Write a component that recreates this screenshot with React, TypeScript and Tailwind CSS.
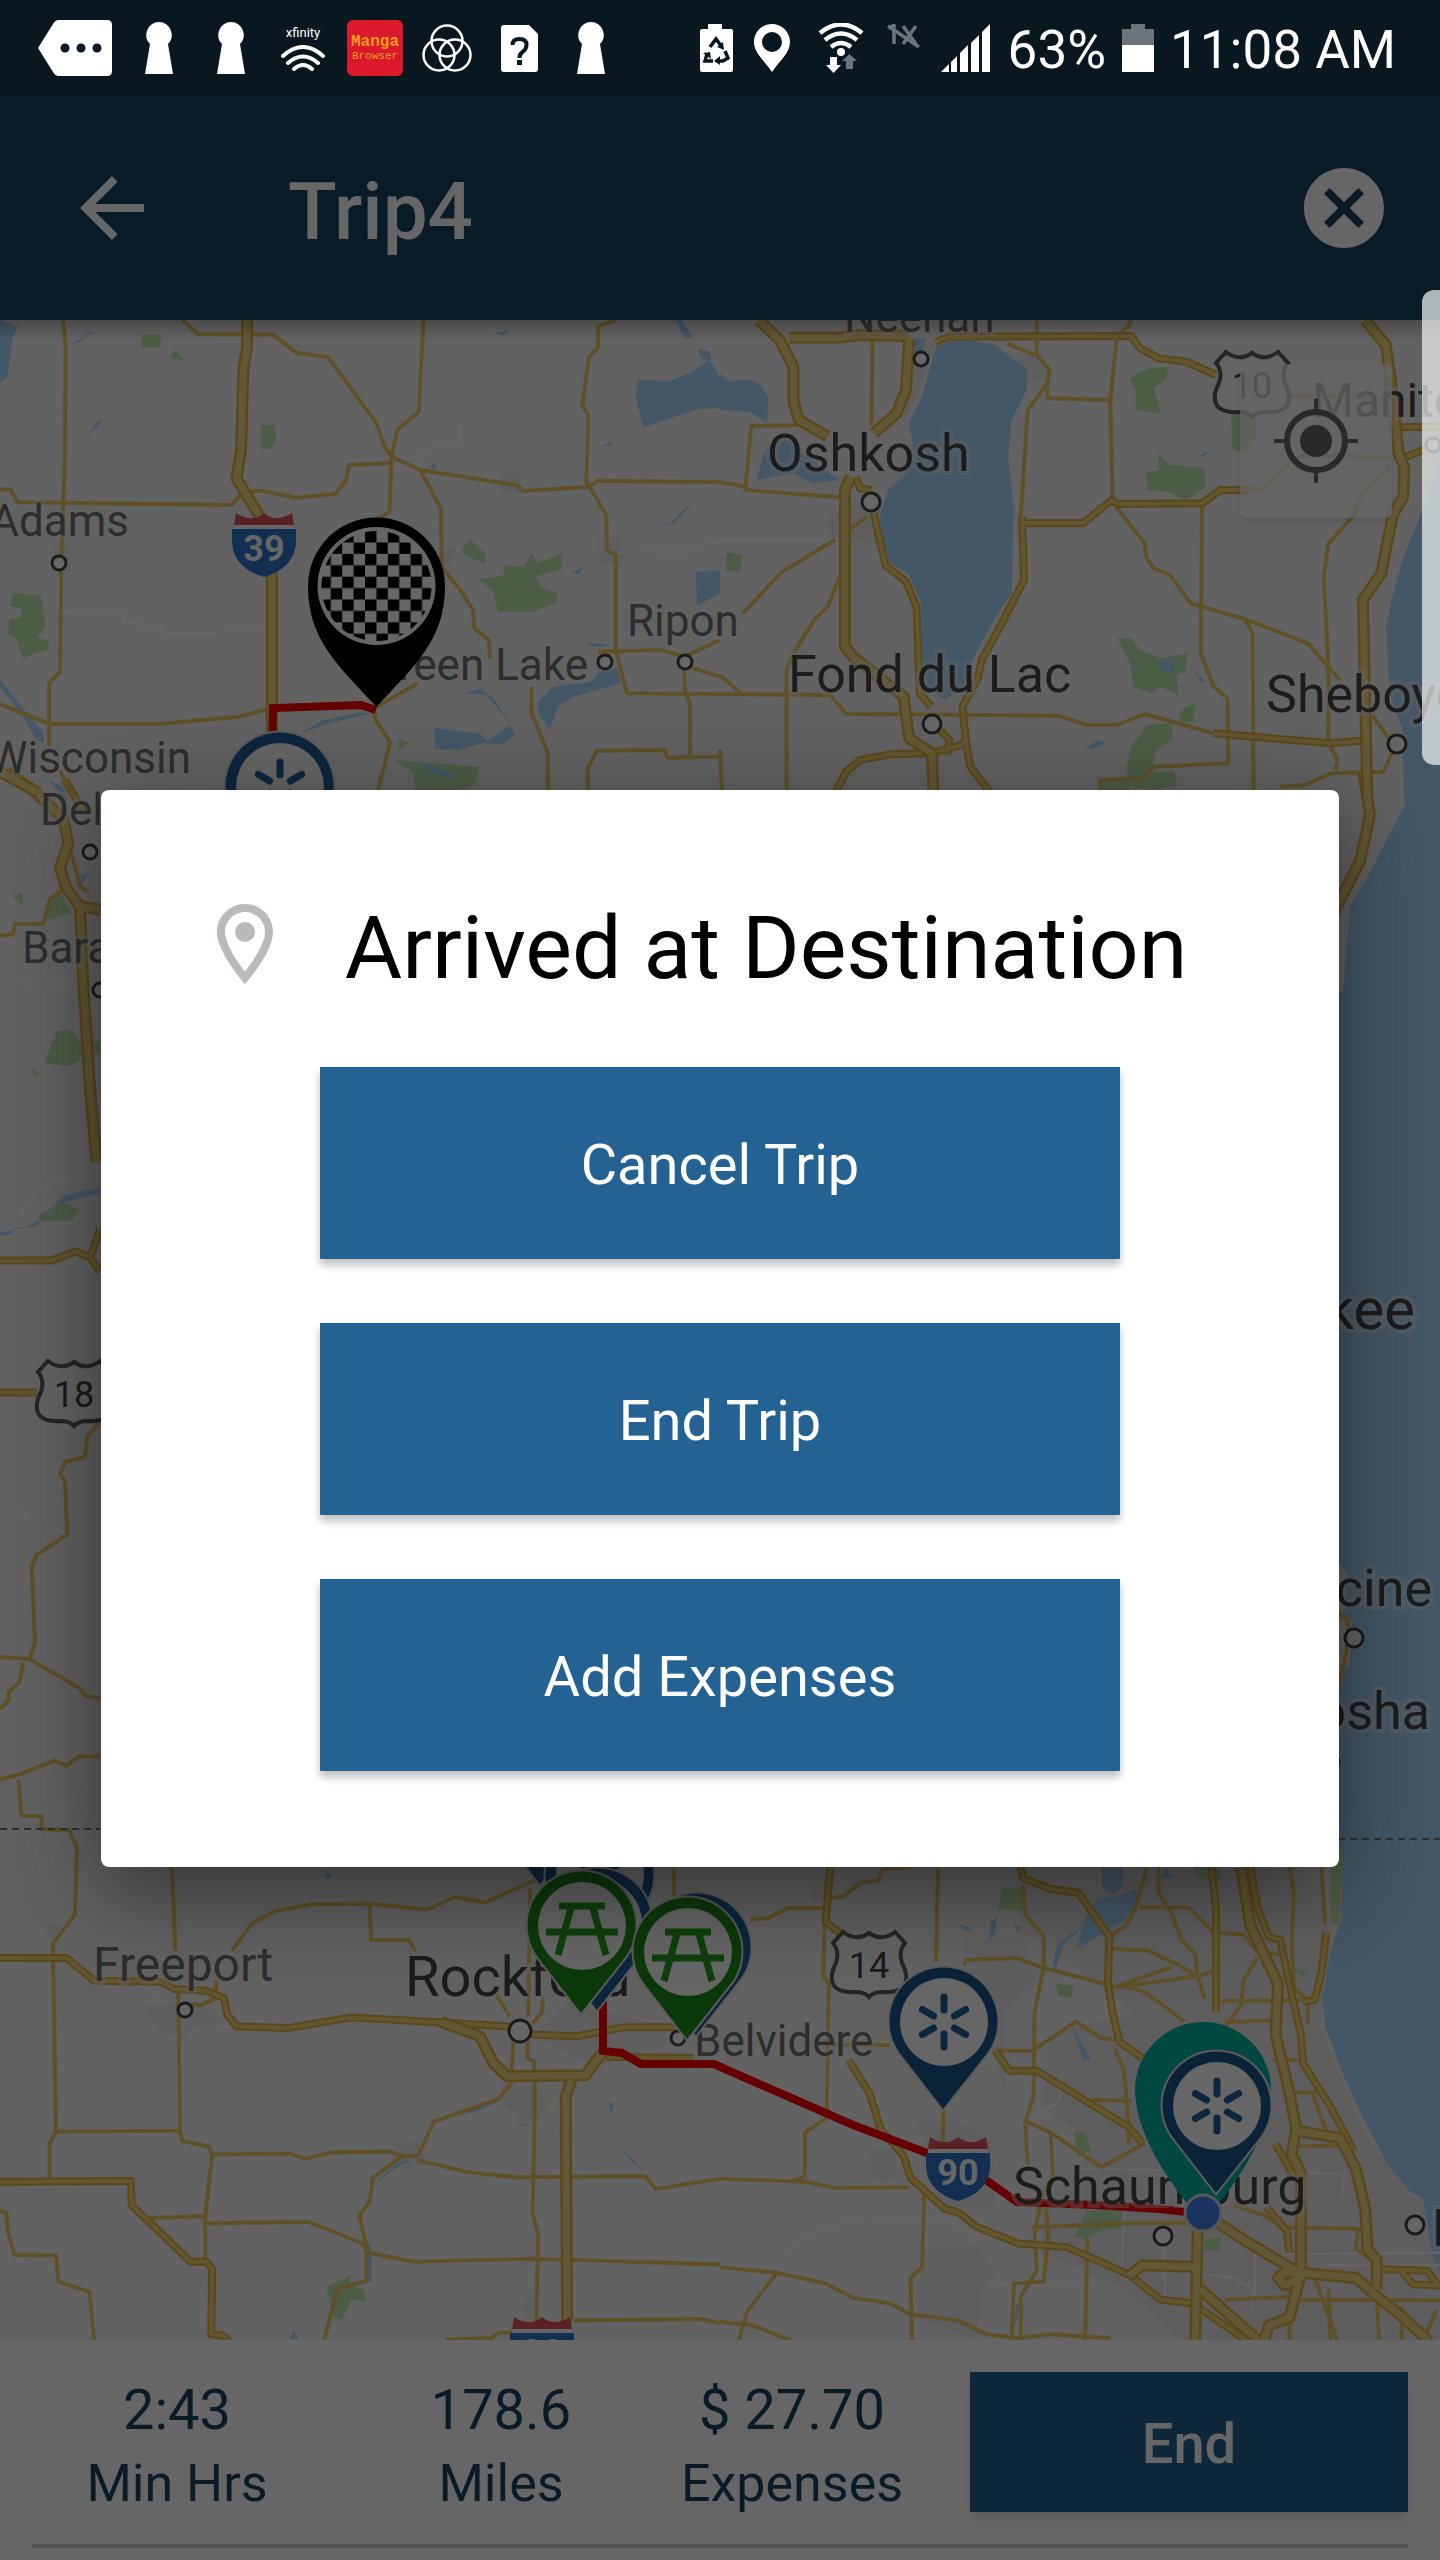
import { useState } from 'react'
import type { ReactNode } from 'react'
import { MdArrowBack, MdCancel } from 'react-icons/md'

interface Tile {
  transform: string
  urban?: string[]
  park?: string[]
  water?: string[]
  land?: string[]
  street?: string[]
  minor: string[]
  main: string[]
  highway: string[]
}

interface Label {
  text: string
  x: number
  y: number
  size: number
  anchor?: 'start' | 'end'
  dark?: boolean
}

// every tile keeps its own grid, the transform places it on the map
const tiles: Tile[] = [
  {
    transform: 'translate(0 780) scale(.33333 .70153)',
    park: [
      '135,402 168,358 210,355 250,378 240,400 205,408 140,405',
      '280,375 300,370 300,392 283,390',
      '97,410 122,418 100,425',
      '140,170 180,160 215,190 145,200',
      '35,165 68,160 68,180',
      '115,620 140,615 180,600 240,612 215,628 120,630',
    ],
    water: [
      '0,650 30,648 50,638 110,636 170,605 300,588 300,582 190,592 120,628 60,640 0,645',
      '240,135 268,133 245,148',
      '145,0 200,30 190,10',
      '160,1418 185,1407 165,1418',
    ],
    street: ['0,290 300,292', '60,620 120,580 240,560 300,550', '0,1040 50,1042 110,1065 300,1078'],
    minor: [
      '0,222 40,220 45,205 130,205 150,170 190,155',
      '300,915 262,935 255,965 195,972 180,990 195,1000 202,1075 110,1105 95,1120 105,1230 88,1253 0,1250',
      '88,1253 240,1295 255,1305 300,1310',
      '70,1258 60,1285 25,1300 28,1310 0,1325',
      '300,1392 235,1392 200,1405 165,1398 60,1417 0,1425',
      '205,90 240,150 262,160',
    ],
    main: ['0,685 155,685 225,672 270,680 300,700', '0,873 110,873', '195,0 250,45', '270,680 300,640'],
    highway: ['20,-12 100,15 190,55 205,90 180,125 200,155 240,180 300,185', '240,180 250,290 270,440 290,545'],
  },
  {
    transform: 'translate(1320 780) scale(.33333 .70153)',
    water: ['255,-10 255,35 140,140 90,180 70,300 40,310 40,1568 360,1568 360,-10'],
    land: ['40,1110 80,1130 70,1190 95,1200 90,1260 40,1290'],
    minor: ['40,1180 85,1200 80,1240 60,1285'],
    main: [],
    highway: ['130,-10 150,50 120,115 40,190'],
  },
  {
    transform: 'translate(0 310) scale(.459184 .333333)',
    urban: [
      '1085,555 1095,490 1125,470 1135,545',
      '1300,690 1350,680 1360,755 1310,765',
      '110,705 150,700 155,785 115,790',
      '965,710 990,715 985,760 965,765',
    ],
    park: [
      '308,75 350,75 350,113 308,113',
      '367,147 383,117 400,150',
      '568,345 598,345 602,385 590,418 568,418',
      '28,850 88,855 100,945 80,985 105,990 105,1018 50,1045 35,985 18,975 20,930 48,920 45,895 22,888',
      '1005,715 1025,690 1060,735 1055,760 1010,735',
      '1040,808 1095,798 1100,765 1140,772 1158,730 1170,760 1222,730 1225,778 1165,800 1180,835 1215,850 1212,878 1160,905 1085,905 1072,840',
      '868,1285 890,1300 868,1322',
      '855,1350 1043,1370 1035,1425 1000,1440 905,1440 900,1385',
    ],
    water: [
      '0,30 40,50 28,80 15,205 0,215',
      '1388,208 1455,215 1500,190 1545,150 1568,200 1568,295 1520,297 1402,352 1385,270',
      '1518,118 1545,122 1550,150 1530,148',
      '1075,68 1112,60 1095,78',
      '1515,785 1568,780 1568,850 1518,888',
      '1170,1180 1205,1130 1285,1115 1305,1085 1345,1075 1352,1120 1250,1160 1215,1190 1197,1258 1175,1215',
      '945,1255 1045,1270 1060,1295 1110,1245 1122,1272 1095,1303 1050,1300 1000,1320 948,1318',
      '655,1270 700,1232 780,1208 810,1210 730,1235',
      '0,1110 95,1270 95,1300 80,1290 40,1200 0,1130',
      '1470,30 1490,80 1510,88 1495,50 1485,30',
      '190,380 210,335 228,328',
      '150,102 170,98 200,68 200,60 180,85',
      '1425,652 1440,648 1470,640 1508,578 1480,610 1462,638',
      '1245,790 1270,768 1262,792',
      '1313,412 1325,397 1337,405',
      '1268,997 1330,1005 1300,1012',
      '1015,1150 1045,1135 1075,1165 1110,1240 1060,1155',
      '905,1352 985,1390 985,1408 940,1390',
      '935,470 950,455 948,478',
    ],
    street: ['130,905 270,915 270,935 350,950 355,970 490,968 500,950 580,950', '865,445 910,440 950,410 1000,390 1000,345', '1345,728 1500,725 1540,700 1568,698'],
    minor: [
      '138,30 143,120 141,460 134,720 131,1085 107,1120 107,1310',
      '0,538 24,540 38,577 505,585 530,545 570,542 645,563 730,552 753,512 760,465 850,460',
      '398,30 430,72 595,74 645,128 715,142 820,340 838,412 853,440 915,480 1125,525 1140,543 1285,530 1303,512 1568,517',
      '922,30 912,305 865,360 853,440 848,605 825,625',
      '1340,32 1303,48 1302,115 1283,140 1268,285 1281,315 1277,515 1320,615 1322,720 1341,735 1341,1020 1365,1150 1568,1152',
      '915,480 960,595 962,770 1005,845 1030,900 1033,955 1065,990 1067,1045',
      '1303,1025 1440,1020 1490,1040 1568,990',
      '1500,1070 1568,1100',
      '1490,1080 1492,1145 1503,1180 1503,1335',
      '0,1182 105,1241 350,1241 520,1220 582,1198',
      '820,1190 910,1120',
      '815,1205 818,1230 850,1297 825,1430 825,1470',
      '1157,1130 1157,1205 1193,1330 1193,1470',
      '1280,1470 1280,1375 1300,1322 1448,1320 1453,1343 1568,1340',
      '130,1380 160,1460',
    ],
    main: [],
    highway: ['538,30 538,110 530,180 525,420 515,505 575,640', '592,760 592,1300', '0,1385 85,1450'],
  },
  {
    transform: 'translate(720 310) scale(.459184 .333333)',
    urban: ['230,620 330,560 370,600 340,700 240,680', '400,90 470,90 430,260 400,330', '640,150 700,130 720,200 670,220'],
    park: [
      '890,205 935,175 978,170 970,210 945,235 960,312 905,300 905,240',
      '1113,290 1165,310 1168,380 1140,435 1115,415',
      '955,430 980,465 1030,470 1055,475 1058,530 1015,570 975,545 930,540 928,485 955,480',
      '15,725 48,735 45,785 12,783',
      '865,985 895,985 915,1020 960,1045 1018,1030 1015,1080 995,1095 998,1155 960,1130 940,1150 900,1130 893,1060',
      '930,1245 985,1240 985,1290 950,1320 940,1385 990,1385 995,1425 950,1440 890,1430 885,1370 895,1310',
      '1005,1200 1038,1175 1030,1235 1000,1235',
      '828,1410 890,1405 890,1440 828,1440',
    ],
    water: [
      '470,110 520,85 600,105 640,150 670,175 668,240 635,330 628,440 640,600 635,850 600,920 550,1050 530,1130 490,1170 450,1130 440,1040 438,880 410,790 370,760 345,640 365,540 400,500 420,400 410,340 440,260',
      '0,190 20,215 60,208 85,220 105,260 103,340 65,305 0,300',
      '95,430 120,385 160,395 190,440 260,510 200,520 160,490 80,510',
      '425,85 450,85 440,130 425,130',
      '1568,440 1530,600 1500,700 1475,800 1450,950 1458,1150 1485,1250 1490,1470 1568,1470',
      '795,1315 825,1290 840,1300 812,1318',
      '1035,1090 1055,1110 1050,1120',
      '1037,440 1068,420 1055,440',
      '890,1085 920,1045 905,1080',
      '955,1055 985,1045 988,1090 960,1080',
    ],
    street: ['0,690 250,690'],
    minor: [
      '332,85 330,345',
      '690,30 690,135 718,180 713,220 670,300 655,620',
      '625,100 685,135',
      '895,30 890,50 865,75 850,270 855,565',
      '713,230 713,265 853,270',
      '180,345 68,348 55,540 260,562',
      '0,517 60,530',
      '862,590 925,700 928,740 945,775 980,795 1025,880 1150,930 1280,1000 1350,1110',
      '1050,590 1047,1030 1075,1130 1105,1165 1107,1360 945,1370 920,1405 828,1410 830,1440',
      '1145,930 1160,970 1162,1440',
      '1460,470 1400,550 1378,620 1325,700 1315,800 1325,1080 1325,1300 1345,1350 1340,1380',
      '1220,1430 1275,1425 1330,1390 1445,1385 1470,1310 1420,1215',
      '250,690 135,785 50,910',
      '265,785 235,890 205,930 160,1030 145,1080 145,1440',
      '0,1152 240,1155 275,1212 735,1217 800,1245 865,1245 925,1212 1075,1270',
      '0,1095 45,1150',
      '320,620 285,655',
      '1160,540 1185,535 1250,445 1290,435 1460,445',
      '1235,258 1460,262',
      '0,1320 5,1470',
    ],
    main: [
      '470,95 500,80 895,78 915,115 955,145 1015,155 1080,195',
      '660,640 790,640 853,570 865,582 1050,580 1090,540 1160,540',
      '335,610 360,765 405,815 428,890 435,1150 460,1190',
      '658,620 662,810 610,950 570,1050 560,1110 528,1190 535,1290 525,1305 460,1330 370,1333 305,1350 275,1385 250,1450',
      '535,1290 545,1370 590,1450',
      '1075,1270 1330,1300 1415,1290',
      '1568,350 1470,352',
      '1568,400 1495,440',
      '295,500 305,535 330,540',
      '470,1250 500,1290 495,1335',
    ],
    highway: [
      '85,30 130,90 160,170 160,275 172,330 235,380',
      '150,83 262,83 300,75 410,78',
      '412,85 405,240 385,310 335,370',
      '285,500 272,540 272,1010 290,1040 400,1160 412,1285 462,1330 465,1470',
      '1405,30 1450,105 1460,200 1478,430 1490,470 1488,560 1465,615 1440,790 1400,870 1410,1470',
    ],
  },
  {
    transform: 'translate(0 1780) scale(.459184 .36352)',
    urban: [
      '310,620 430,610 480,670 420,680 395,725 340,680',
      '1090,830 1180,850 1190,900 1150,950 1095,890',
      '1240,610 1450,680 1450,730 1300,790 1160,700',
      '860,1000 910,990 930,1060 880,1070',
      '100,395 135,395 130,440 105,440',
      '1140,1430 1165,1420 1165,1480 1145,1480',
    ],
    park: ['710,1395 765,1362 760,1390 790,1400 797,1435 765,1430 745,1485 728,1480'],
    water: [
      '705,262 713,250 725,265 713,272',
      '1325,885 1337,888 1330,925',
      '1355,1015 1400,1070 1375,1050',
      '1120,935 1160,955 1140,952',
      '940,935 1085,885 1040,912',
      '815,1110 870,1048 900,1045 870,1060',
      '630,1538 640,1513 650,1538',
      '800,1265 810,1300 808,1380 750,1395 803,1375',
    ],
    street: ['300,560 360,620', '440,670 515,680'],
    minor: [
      '40,0 47,98 90,100 90,135 150,138 168,185 163,370 115,450 122,965 108,1000 108,1095',
      '370,240 375,250 382,470',
      '388,575 392,965 120,967',
      '392,965 397,993 455,1008 462,1030 447,1200 447,1330',
      '505,470 548,395 600,360 680,342 805,340 930,357 990,322 1055,337 1175,270',
      '805,340 808,440 890,440 905,470',
      '462,1030 630,1028 665,1042 720,1025 850,1022 875,1035 910,1035',
      '910,1035 945,940 1085,878 1113,835 1118,720',
      '875,1035 812,1095 805,1160 782,1200 798,1280 798,1378 735,1400 705,1545',
      '910,1045 1015,1078 1120,1093 1405,1090 1428,1125 1568,1097',
      '320,1205 447,1200',
      '450,1220 670,1215 790,1275 800,1300 900,1325 1160,1317 1568,1333',
      '1150,720 1148,765 1163,775 1165,870 1160,1190 1172,1250 1168,1490',
      '0,1185 14,1190 18,1250 32,1307 122,1308 127,1380 195,1408 205,1545',
      '970,1540 1070,1535 1085,1522 1115,1520',
      '1250,1487 1530,1483 1568,1495',
      '1080,590 1110,650',
      '1155,300 1150,650',
      '1183,600 1180,640 1160,670',
      '400,618 440,618 470,600 470,550',
      '1468,240 1468,330',
    ],
    main: [
      '0,490 145,490 205,552 350,555 380,575 450,580 488,600 495,645 515,678 630,682 765,653 970,668 1110,678',
      '1155,700 1255,705 1360,680 1470,680',
      '0,1105 285,1103 287,1170 415,1325 450,1325 462,1345 460,1525 485,1528 500,1545',
      '1320,762 1510,765',
    ],
    highway: ['960,665 1045,705 1075,780 1105,815 1275,812 1300,770 1320,740', '1245,825 1232,870 1235,1490'],
  },
  {
    transform: 'translate(720 1780) scale(.459184 .36352)',
    urban: [
      '640,280 820,300 1000,250 1310,240 1330,480 1310,680 1400,960 1500,1140 1568,1180 1568,1540 1000,1540 880,1400 700,1300 700,1180 820,1000 700,900 720,700 900,640 760,500 660,420',
      '430,940 500,930 590,990 600,1180 480,1170',
      '440,1290 560,1280 600,1360 570,1400 560,1540 430,1480',
      '530,440 660,430 690,560 620,640 620,850 580,700',
      '325,1020 380,1010 380,1100 335,1100',
      '195,290 235,280 235,330 200,340',
    ],
    park: [
      '615,295 665,295 665,360 605,355',
      '1035,240 1090,240 1090,278 1035,270',
      '730,560 770,565 765,602 738,595',
      '770,970 795,970 810,1020 780,1035',
      '800,1185 875,1180 880,1230 830,1240 800,1260 770,1258',
      '1055,1262 1092,1258 1088,1298 1055,1292',
      '1245,515 1278,525 1270,540',
      '640,395 662,405 645,420',
      '1330,200 1358,200 1348,400 1330,390',
    ],
    water: [
      '1358,0 1568,0 1568,1180 1500,1130 1455,1060 1400,930 1360,820 1318,680 1312,600 1330,470 1352,380 1358,200',
      '1530,1140 1568,1160 1568,1355 1550,1300',
      '830,240 878,240 878,290 858,318 833,295',
      '820,330 860,320 905,300 912,325 880,390 850,405 865,445 830,425 778,462 795,380',
      '585,445 590,390 603,375 600,420',
      '515,395 550,408 535,415',
      '960,270 970,240 988,268',
      '765,670 808,770 790,770',
      '725,500 735,450 790,400 745,460 730,530 742,610',
      '640,1500 645,1440 652,1440 645,1500',
    ],
    street: [
      '880,1180 875,1350',
      '965,1270 970,1430',
      '1165,1300 1165,1420',
      '1225,1305 1568,1300',
      '1325,1335 1568,1335',
      '600,1385 795,1390',
      '1280,1080 1360,1085 1355,1145',
      '150,1295 180,1255 320,1200 500,1215 560,1250',
      '675,940 740,880 745,800',
      '770,1070 1130,1075',
      '1055,1360 1120,1370 1160,1400 1160,1460',
    ],
    minor: [
      '65,383 105,380 150,352 225,352',
      '240,325 270,320 305,283 345,275 355,245 415,240',
      '475,240 470,500',
      '228,390 225,540 237,560 232,930 185,970 185,1090 155,1105',
      '240,728 370,730',
      '487,905 485,1000',
      '533,510 535,495 645,490 700,515 865,570 1040,540 1085,520',
      '660,290 665,370 705,430 705,515 685,640 683,870 665,940 670,1060',
      '600,745 680,745 775,665 830,710 870,715',
      '855,465 930,468 1000,510 1040,540 1055,600',
      '865,565 920,580 955,610 1010,665',
      '870,565 985,515',
      '1085,420 1140,425 1170,470 1220,480',
      '1090,608 1290,605',
      '930,240 905,350 885,400 850,430',
      '915,350 1020,350 1075,420',
      '955,240 955,310 985,370 1005,440 1035,480 1040,540',
      '1170,490 1140,550 1135,620 1100,680',
      '1240,240 1250,310 1245,450 1250,570 1280,610 1280,670',
      '1100,665 1205,662',
      '1205,770 1260,770',
      '1240,860 1300,860',
      '1310,240 1318,400',
      '810,880 895,883',
      '860,740 880,800 890,950 890,1000',
      '670,940 720,970 830,1065 925,1000',
      '720,975 725,1090 700,1150 685,1250 690,1350 655,1420 655,1545',
      '0,1097 185,1105 250,1122 410,1120',
      '445,1130 440,1340 415,1370 418,1545',
      '0,1340 120,1355 230,1385 290,1425 370,1440 415,1470 520,1487 580,1525 650,1535 720,1525 850,1535',
      '125,1355 60,1460 40,1545',
      '0,1490 70,1500 160,1545',
      '680,1230 880,1220 1020,1218',
      '710,1180 715,1250 705,1380 640,1385 635,1545',
      '800,1260 795,1545',
      '1215,1230 1390,1235 1385,1290 1430,1330',
      '1120,1170 1190,1200 1230,1240',
      '1250,1008 1360,1005',
      '1265,1430 1568,1432',
      '1100,1430 1265,1420',
      '1530,1545 1560,1460',
      '1290,860 1330,1000',
      '1240,1400 1240,1545',
      '1325,1400 1330,1545',
      '1430,1400 1435,1545',
      '1295,1370 1345,1545',
      '1485,1450 1485,1545',
    ],
    main: [
      '240,240 230,390 290,450',
      '655,240 660,270 720,300 780,310 848,430 845,560 855,640 870,720 920,765',
      '600,745 630,800 690,800 890,955 920,1000',
      '280,770 325,860 350,960 400,1035 415,1095 490,1180 520,1190 560,1230 650,1275 755,1285 890,1360 960,1430 1030,1440 1150,1545',
      '1155,240 1170,350 1195,430 1220,440 1240,560 1265,700 1270,780 1330,900 1380,1020',
      '1070,240 1080,350 1080,640',
      '1210,1000 1245,1080 1260,1100',
      '1190,1175 1235,1240 1240,1300',
      '1430,1345 1540,1350 1565,1390 1510,1388 1480,1345',
      '1320,420 1310,530 1295,605 1270,610',
    ],
    highway: [
      '1135,240 1155,400 1185,480 1215,560 1210,700 1240,860 1255,960 1245,1030 1265,1080 1265,1360',
      '1255,965 1350,985 1385,1070 1405,1180 1410,1290 1430,1320 1430,1400',
      '890,1365 920,1335 1040,1340',
      '1040,1240 1035,1545',
      '1075,1210 1140,1265 1260,1355 1385,1370 1440,1430 1480,1470 1545,1545',
      '1265,1360 1240,1480 1195,1500 1185,1545',
      '1045,1400 1175,1545',
      '1265,1370 1230,1390 1215,1370 1235,1350 1265,1360',
    ],
  },
]

const labels: Label[] = [
  { text: 'Neenah', x: 844, y: 332, size: 44 },
  { text: 'Oshkosh', x: 767, y: 471, size: 52, dark: true },
  { text: 'Fond du Lac', x: 788, y: 692, size: 52, dark: true },
  { text: 'Sheboygan', x: 1266, y: 712, size: 52, dark: true },
  { text: 'Manitowoc', x: 1312, y: 417, size: 48, dark: true },
  { text: 'Adams', x: 129, y: 536, size: 44, anchor: 'end' },
  { text: 'Wisconsin', x: 191, y: 773, size: 44, anchor: 'end' },
  { text: 'Dells', x: 40, y: 825, size: 44 },
  { text: 'Baraboo', x: 22, y: 963, size: 44 },
  { text: 'Green Lake', x: 588, y: 680, size: 44, anchor: 'end' },
  { text: 'Ripon', x: 627, y: 636, size: 44 },
  { text: 'Milwaukee', x: 1415, y: 1329, size: 58, anchor: 'end', dark: true },
  { text: 'Racine', x: 1432, y: 1606, size: 52, anchor: 'end', dark: true },
  { text: 'Kenosha', x: 1430, y: 1729, size: 52, anchor: 'end', dark: true },
  { text: 'Freeport', x: 93, y: 1981, size: 48 },
  { text: 'Rockford', x: 405, y: 1996, size: 56, dark: true },
  { text: 'Belvidere', x: 694, y: 2056, size: 44 },
  { text: 'Schaumburg', x: 1013, y: 2204, size: 52, dark: true },
  { text: 'Evanston', x: 1432, y: 2246, size: 52, dark: true },
]

const towns: [number, number, number][] = [
  [59, 563, 7], [605, 662, 7], [685, 662, 7], [921, 359, 7], [90, 852, 7], [100, 990, 7],
  [185, 2010, 7], [678, 2038, 7], [1433, 445, 7], [871, 502, 9], [932, 724, 9], [1397, 744, 9],
  [1354, 1638, 9], [1330, 1762, 9], [1163, 2236, 9], [1415, 2225, 9], [520, 2031, 11],
]

const Lines = ({ list, color, width }: { list: string[]; color: string; width: number }) => (
  <g fill="none" stroke={color} strokeWidth={width} strokeLinejoin="round">
    {list.map((points) => (
      <polyline key={points} points={points} vectorEffect="non-scaling-stroke" />
    ))}
  </g>
)

const Areas = ({ list = [], color }: { list?: string[]; color: string }) => (
  <g fill={color}>
    {list.map((points) => (
      <polygon key={points} points={points} />
    ))}
  </g>
)

const Interstate = ({ x, y, number }: { x: number; y: number; number: string }) => (
  <g transform={`translate(${x} ${y})`}>
    <path d="M2 11h60v6H2z" fill="#fff" />
    <path d="M2 12 4 0q7 5 15 5t13-5q6 5 13 5T60 0l2 12z" fill="#e2565c" />
    <path d="M0 16h64v12c0 17-11 30-32 36C11 58 0 45 0 28z" fill="#2f74c8" />
    <text x="32" y="48" fontSize="36" fontWeight="700" textAnchor="middle" fill="#fff">{number}</text>
  </g>
)

const UsRoute = ({ x, y, number }: { x: number; y: number; number: string }) => (
  <g transform={`translate(${x} ${y})`}>
    <path
      d="M12 2q13 10 26 1 13 9 26-1l10 11q-7 8-3 20 8 15 1 24-7 6-20 5-10 0-14 5-4-5-14-5-13 1-20-5-7-9 1-24 4-12-3-20z"
      fill="#fafafa"
      stroke="#5c5c5c"
      strokeWidth="4"
    />
    <text x="38" y="48" fontSize="36" textAnchor="middle" fill="#444">{number}</text>
  </g>
)

// x / y is the tip of the pin
const Pin = ({ x, y, color, children }: { x: number; y: number; color: string; children?: ReactNode }) => (
  <g transform={`translate(${x} ${y})`}>
    <path d="M0 0-44-57A54 54 0 1 1 45-57z" fill={color} stroke="#e4e4e4" strokeWidth="4" paintOrder="stroke" />
    <g transform="translate(1 -87)">
      <circle r="44" fill="#fff" />
      {children}
    </g>
  </g>
)

const Spark = () => (
  <g stroke="#20609c" strokeWidth="7" strokeLinecap="round">
    {[0, 60, 120, 180, 240, 300].map((angle) => (
      <path key={angle} d="M0-12V-25" transform={`rotate(${angle})`} />
    ))}
  </g>
)

const Picnic = () => (
  <path d="M-23-20h46M-36 6h72M-11-18-24 29M11-18 24 29" fill="none" stroke="#26a01e" strokeWidth="7" />
)

const MapCanvas = () => (
  <svg
    viewBox="0 320 1440 2020"
    preserveAspectRatio="xMidYMid slice"
    className="block h-full w-full font-[Roboto,sans-serif]"
    role="img"
    aria-label="Route map"
  >
    <defs>
      <pattern id="checker" x="365" y="576.7" width="22.8" height="22.8" patternUnits="userSpaceOnUse">
        <path d="M0 0h11.4v11.4H0zM11.4 11.4h11.4v11.4H11.4z" fill="#000" />
      </pattern>
      <linearGradient id="bar-shadow" x1="0" y1="0" x2="0" y2="1">
        <stop offset="0" stopColor="#000" stopOpacity=".25" />
        <stop offset="1" stopColor="#000" stopOpacity="0" />
      </linearGradient>
    </defs>

    <path d="M0 320h1440v2020H0z" fill="#f6f6f6" />

    {tiles.map((tile) => (
      <g key={tile.transform} transform={tile.transform}>
        <Areas list={tile.urban} color="#ebebee" />
        <Areas list={tile.park} color="#bfe8ad" />
        <Areas list={tile.water} color="#aadaff" />
        <Areas list={tile.land} color="#f3f3ee" />
        <Lines list={tile.street ?? []} color="#ffffff" width={2} />
        <Lines list={tile.minor} color="#eec763" width={4} />
        <Lines list={tile.main} color="#e2b348" width={8} />
        <Lines list={tile.main} color="#f6d676" width={4} />
        <Lines list={tile.highway} color="#e2b348" width={12} />
        <Lines list={tile.highway} color="#f8db86" width={7} />
      </g>
    ))}

    {/* State line */}
    <path d="M0 1829h100M1338 1839h102" stroke="#777" strokeWidth="2" strokeDasharray="7 5" fill="none" />

    {towns.map(([x, y, r]) => (
      <circle key={`${x}-${y}`} cx={x} cy={y} r={r} fill="#fff" stroke="#444" strokeWidth="3" />
    ))}

    <polyline
      points="376,710 361,705 273,708 272,760"
      fill="none" stroke="#ff0000" strokeWidth="8"
    />
    <polyline
      points="603,1990 603,2051 622,2053 641,2064 714,2064 725,2069 853,2125 927,2153 986,2180 1017,2202 1096,2205 1160,2209 1202,2214"
      fill="none" stroke="#ff0000" strokeWidth="8"
    />

    {labels.map((label) => (
      <text
        key={label.text}
        x={label.x}
        y={label.y}
        fontSize={label.size}
        textAnchor={label.anchor ?? 'start'}
        fill={label.dark ? '#484848' : '#707070'}
        stroke="#f6f6f6"
        strokeOpacity=".4"
        strokeWidth="8"
        paintOrder="stroke"
      >
        {label.text}
      </text>
    ))}

    <Interstate x={232} y={513} number="39" />
    <Interstate x={926} y={2137} number="90" />
    <Interstate x={510} y={2317} number="39" />
    <UsRoute x={36} y={1359} number="18" />
    <UsRoute x={1214} y={350} number="10" />
    <UsRoute x={831} y={1930} number="14" />

    {/* Finish */}
    <path d="M376.500 707C338 665 308 640 308 586a68.500 68.500 0 0 1 137 0c0 54-30 79-68.500 121z" fill="#000" />
    <circle cx="376.500" cy="586" r="59" fill="#fff" />
    <circle cx="376.500" cy="586" r="55" fill="url(#checker)" />

    {/* Stops */}
    <Pin x={279} y={874} color="#20609c"><Spark /></Pin>
    <Pin x={540} y={1884} color="#20609c"><Spark /></Pin>
    <Pin x={599} y={1962} color="#20609c"><Spark /></Pin>
    <Pin x={597} y={2010} color="#20609c"><Spark /></Pin>
    <Pin x={696} y={2035} color="#20609c"><Spark /></Pin>
    <Pin x={581} y={2013} color="#1f8f1a"><Picnic /></Pin>
    <Pin x={687} y={2039} color="#1f8f1a"><Picnic /></Pin>
    <Pin x={943} y={2109} color="#1c578c"><Spark /></Pin>
    <path d="M1203 2222c-38-42-68-92-68-132a68 68 0 0 1 136 0c0 40-30 90-68 132z" fill="#00b3a1" />
    <Pin x={1216} y={2193} color="#1c578c"><Spark /></Pin>
    <circle cx="1203" cy="2213" r="18" fill="#4380ee" stroke="#ddd" strokeWidth="3" />

    <path d="M0 320h1440v20H0z" fill="url(#bar-shadow)" />
  </svg>
)

const Keyhole = () => (
  <svg viewBox="0 0 28 52" className="h-[52px] w-7" aria-hidden="true">
    <path d="M14 0a13 13 0 0 1 9 22l5 30H0l5-30A13 13 0 0 1 14 0z" fill="#fff" />
  </svg>
)

const PlaceIcon = () => (
  <svg viewBox="0 0 24 24" className="h-24 w-24 shrink-0" fill="#bbb9b9" aria-hidden="true">
    <path d="M12 2C8.130 2 5 5.130 5 9c0 5.250 7 13 7 13s7-7.750 7-13c0-3.870-3.130-7-7-7zM7 9c0-2.760 2.240-5 5-5s5 2.240 5 5c0 2.880-2.880 7.190-5 9.880C9.920 16.210 7 11.850 7 9z" />
    <circle cx="12" cy="9" r="2.500" />
  </svg>
)

const Cell = ({ children }: { children: ReactNode }) => (
  <span className="flex w-[72px] items-center justify-center">{children}</span>
)

const StatusBar = () => (
  <div className="flex h-24 shrink-0 items-center justify-between bg-[#081720] pr-[44px] pl-[38px] text-white">
    <div className="flex items-center">
      <svg viewBox="0 0 85 56" className="h-14 w-[85px]" aria-hidden="true">
        <path d="M21 0h48q5 0 5 5v46q0 5-5 5H21q-4 0-6-4L0 28 15 4q2-4 6-4z" fill="#fff" />
        <g fill="#081720">
          <circle cx="27" cy="28" r="4.500" />
          <circle cx="43" cy="28" r="4.500" />
          <circle cx="59" cy="28" r="4.500" />
        </g>
      </svg>
      <Cell><Keyhole /></Cell>
      <Cell><Keyhole /></Cell>
      <Cell>
        <span className="flex flex-col items-center gap-1">
          <span className="text-[13px] leading-4">xfinity</span>
          <svg viewBox="0 0 44 26" className="h-[26px] w-11" fill="none" stroke="#fff" strokeWidth="4" strokeLinecap="round" aria-hidden="true">
            <path d="M2 11q20-18 40 0M7 18q15-13 30 0M13 24q9-8 18 0" />
          </svg>
        </span>
      </Cell>
      <Cell>
        <span className="flex h-14 w-14 flex-col items-center justify-center rounded-md bg-[#dc182c] font-['Liberation_Mono',monospace] text-[#f59e1b]">
          <span className="text-base leading-4 font-bold">Manga</span>
          <span className="text-[11px] leading-3">Browser</span>
        </span>
      </Cell>
      <Cell>
        <svg viewBox="0 0 50 48" className="h-12 w-[50px]" fill="none" stroke="#fff" strokeWidth="2.500" aria-hidden="true">
          <circle cx="25" cy="17" r="15.500" />
          <circle cx="17" cy="31" r="15.500" />
          <circle cx="33" cy="31" r="15.500" />
        </svg>
      </Cell>
      <Cell>
        <svg viewBox="0 0 37 47" className="h-[47px] w-[37px]" aria-hidden="true">
          <path d="M3 0h25l9 9v35q0 3-3 3H3q-3 0-3-3V3q0-3 3-3z" fill="#fff" />
          <path d="M11.500 20q0-6 7-6t7 6q0 4-4 7-3 2-3 6" fill="none" stroke="#081720" strokeWidth="4" />
          <path d="M16 35h5v5h-5z" fill="#081720" />
        </svg>
      </Cell>
      <Cell><Keyhole /></Cell>
    </div>

    <div className="flex items-center">
      <svg viewBox="0 0 56 48" className="h-12 w-14" aria-hidden="true">
        <path d="M20 0h14v5h9q2 0 2 2v39q0 2-2 2H14q-2 0-2-2V7q0-2 2-2h6z" fill="#fff" />
        <path d="m22 23 6-8 6 8M37 27l3 7-5 3h-4M25 37h-8l2-7" fill="none" stroke="#081720" strokeWidth="3.500" />
        <path d="m35 18 1 8-7-3zM32 32v9l-6-4zM15 29l7-1 1 7z" fill="#081720" />
      </svg>
      <svg viewBox="0 0 56 48" className="h-12 w-14" aria-hidden="true">
        <path d="M28 0c10 0 18 8 18 18 0 11-10 18-18 30C20 36 10 29 10 18 10 8 18 0 28 0zm0 8a10 10 0 1 0 0 20 10 10 0 0 0 0-20z" fill="#fff" fillRule="evenodd" />
      </svg>
      <svg viewBox="0 0 80 50" className="h-[50px] w-20" aria-hidden="true">
        <path d="M20 10q21-17 42 0M25 17q16-13 32 0M31 24q10-8 20 0" fill="none" stroke="#fff" strokeWidth="4.500" />
        <circle cx="41" cy="29" r="4" fill="#fff" />
        <path d="M30 34h7v8h4l-7.500 8-7.500-8h4z" fill="#fff" />
        <path d="M46 46h7v-8h4l-7.500-7-7.500 7h4z" fill="#69747b" />
      </svg>
      <svg viewBox="0 0 48 48" className="h-12 w-12" fill="none" stroke="#69747b" strokeWidth="3.500" aria-hidden="true">
        <path d="m9 5 5-4v19M23 2l13 18M36 2 23 20M8 2l31 21" />
      </svg>
      <svg viewBox="0 0 72 48" className="h-12 w-[72px]" fill="#fff" aria-hidden="true">
        <path d="m13 48 8-8v8zM23 38l6-6v16h-6zM32 29l8-8v27h-8zM43 19l8-8v37h-8zM54 8l8-8v48h-8z" />
      </svg>
      <span className="ml-2 pt-1 text-[53px] leading-[60px]">63%</span>
      <svg viewBox="0 0 32 48" className="mx-4 h-12 w-8" aria-hidden="true">
        <path d="M9 0h14v5h9v16H0V5h9z" fill="#69747b" />
        <path d="M0 21h32v27H0z" fill="#fff" />
      </svg>
      <span className="pt-1 text-[53px] leading-[60px]">11:08 AM</span>
    </div>
  </div>
)

const stats = [
  { value: '2:43', label: 'Min Hrs' },
  { value: '178.6', label: 'Miles' },
  { value: '$ 27.70', label: 'Expenses' },
]

const actions = ['Cancel Trip', 'End Trip', 'Add Expenses']

export default function App() {
  const [open, setOpen] = useState(true)

  return (
    <div className="relative flex h-screen flex-col overflow-hidden bg-white font-[Roboto,sans-serif]">
      <StatusBar />

      <header className="flex h-56 shrink-0 items-center bg-[#14445f] px-12 text-white">
        <button type="button" aria-label="Back" className="ml-4">
          <MdArrowBack className="h-24 w-24" />
        </button>
        <h1 className="ml-32 flex-1 pt-2 text-[80px] leading-24 font-medium">Trip4</h1>
        <button type="button" aria-label="Close trip">
          <MdCancel className="h-24 w-24" />
        </button>
      </header>

      <main className="relative min-h-0 flex-1">
        <MapCanvas />
        <button
          type="button"
          aria-label="My location"
          className="absolute top-11 right-12 flex h-[154px] w-[152px] items-center justify-center rounded-md bg-[#fafafa]/75 shadow-md"
        >
          <svg viewBox="0 0 84 84" className="h-[84px] w-[84px]" aria-hidden="true">
            <circle cx="42" cy="42" r="29" fill="none" stroke="#666" strokeWidth="6" />
            <circle cx="42" cy="42" r="16" fill="#666" />
            <path d="M42 0v12M42 72v12M0 42h12M72 42h12" stroke="#666" strokeWidth="4" />
          </svg>
        </button>
      </main>

      {/* Trip summary */}
      <footer className="shrink-0 bg-white px-8 pt-8 pb-3">
        <div className="grid grid-cols-[290fr_358fr_224fr_504fr] items-start text-center text-[#14445f]">
          {stats.map((stat) => (
            <div key={stat.label}>
              <p className="text-[56px] leading-[76px]">{stat.value}</p>
              <p className="text-[52px] leading-[72px]">{stat.label}</p>
            </div>
          ))}
          <div className="pl-[66px]">
            <button type="button" className="h-[140px] w-full bg-[#246293] pt-1 text-[56px] font-medium text-white shadow-lg">
              End
            </button>
          </div>
        </div>
        <hr className="mt-6 border-t-4 border-[#d2d2d2]" />
      </footer>

      {open && (
        <div className="absolute inset-x-0 top-24 bottom-0 flex items-center justify-center bg-black/60">
          <div
            role="dialog"
            aria-labelledby="arrived-title"
            className="w-[86%] rounded-lg bg-white pt-[102px] pb-24 shadow-[0_24px_90px_rgba(0,0,0,0.5)]"
          >
            <div className="mb-[71px] flex items-center gap-[52px] px-24">
              <PlaceIcon />
              <h2 id="arrived-title" className="pt-2 text-[88px] leading-24 text-black">Arrived at Destination</h2>
            </div>
            <div className="mx-auto flex w-[800px] max-w-full flex-col gap-16">
              {actions.map((action) => (
                <button
                  key={action}
                  type="button"
                  onClick={() => setOpen(false)}
                  className="h-48 bg-[#246293] pt-1 text-[56px] text-white shadow-[0_6px_8px_rgba(0,0,0,0.25)]"
                >
                  {action}
                </button>
              ))}
            </div>
          </div>
        </div>
      )}

      {/* Edge panel handle */}
      <div className="absolute top-[290px] right-0 h-[475px] w-[18px] rounded-l-xl bg-[#f4f6f7]/70" />
    </div>
  )
}
